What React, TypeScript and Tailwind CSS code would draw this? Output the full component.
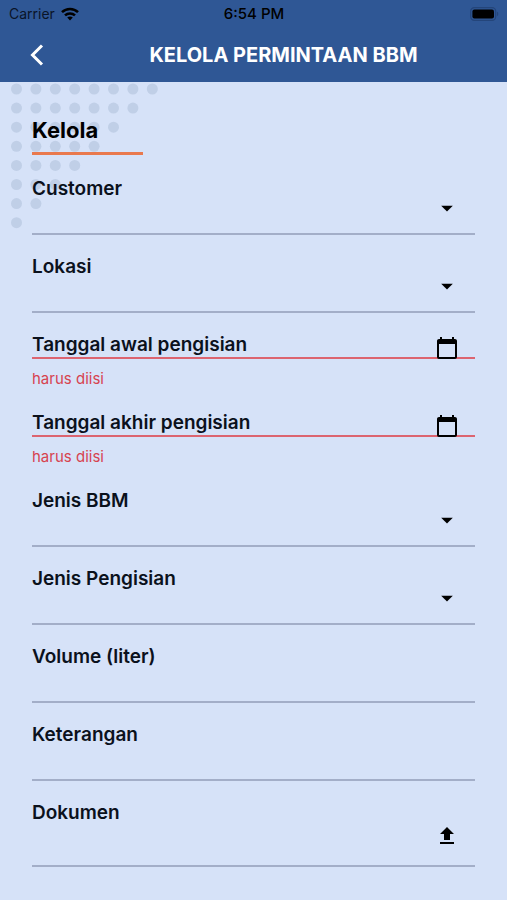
import type { ReactNode } from "react";
import { MdArrowDropDown, MdCalendarToday, MdUpload } from "react-icons/md";

function StatusBar() {
  return (
    <div className="grid h-7 grid-cols-3 items-center pr-2 pl-[9px] text-sm text-[#0a1428]">
      <div className="flex items-center gap-1.5">
        <span>Carrier</span>
        <svg width="18" height="14" viewBox="0 0 18 14" fill="none" stroke="#000" strokeWidth="2.6" aria-hidden="true">
          <path d="M1 5.1C5.4 .9 12.6 .9 17 5.1" />
          <path d="M4 8.4C6.8 5.8 11.2 5.8 14 8.4" />
          <path d="M9 13.4 6.2 10.5C7.7 9.1 10.3 9.1 11.8 10.5Z" fill="#000" stroke="none" />
        </svg>
      </div>
      <span className="text-center text-[15px] font-medium text-black">6:54 PM</span>
      <svg className="justify-self-end" width="29" height="14" viewBox="0 0 29 14" aria-hidden="true">
        <rect x=".7" y=".7" width="25" height="12.6" rx="3.6" fill="none" stroke="#24457a" strokeWidth="1.2" />
        <rect x="2.4" y="2.4" width="21.6" height="9.2" rx="2" fill="#000" />
        <path d="M27 4.8c1.7.6 1.7 3.8 0 4.4Z" fill="#24457a" />
      </svg>
    </div>
  );
}

function DotPattern() {
  const dots: ReactNode[] = [];
  for (let row = 0; row < 8; row++) {
    for (let col = 0; col < 8 - row; col++) {
      dots.push(<circle key={`${row}-${col}`} cx={16.5 + col * 19.4} cy={7 + row * 19.1} r="5.5" />);
    }
  }
  return (
    <svg className="pointer-events-none absolute top-0 left-0" width="160" height="150" fill="#c0cfe7" aria-hidden="true">
      {dots}
    </svg>
  );
}

type FieldProps = { id: string; label: string; kind: "select" | "date" | "text" | "file" };

const control = "col-start-1 row-start-1 w-full appearance-none rounded-none border-b-2 bg-transparent pt-6 pr-14 text-base outline-none";
const iconBox = "pointer-events-none col-start-1 row-start-1 mr-4 flex w-6 items-center justify-center justify-self-end pt-2 pb-0.5";

function Field({ id, label, kind }: FieldProps) {
  const errorId = `${id}-error`;
  return (
    <div className="pt-[18px]">
      <div className="grid">
        {kind === "select" && (
          <select id={id} defaultValue="" className={`${control} h-[60px] border-[#a3aec8]`}>
            <option value=""></option>
          </select>
        )}
        {kind === "text" && <input id={id} type="text" className={`${control} h-[60px] border-[#a3aec8]`} />}
        {kind === "date" && (
          <input
            id={id}
            type="text"
            aria-invalid="true"
            aria-describedby={errorId}
            className={`${control} h-7 border-[#dc6470]`}
          />
        )}
        {kind === "file" && (
          <input id={id} type="file" className={`${control} h-[68px] border-[#a3aec8] text-transparent file:hidden`} />
        )}
        <label
          htmlFor={id}
          className="z-10 col-start-1 row-start-1 self-start justify-self-start text-[19px] leading-7 font-semibold text-[#0b111c]"
        >
          {label}
        </label>
        {kind === "select" && (
          <span className={`${iconBox} self-stretch`}>
            <MdArrowDropDown className="size-7 shrink-0" />
          </span>
        )}
        {kind === "date" && (
          <span className={`${iconBox} h-7 self-start`}>
            <MdCalendarToday className="size-6 shrink-0" />
          </span>
        )}
        {kind === "file" && (
          <span className={`${iconBox} self-stretch`}>
            <MdUpload className="size-6 shrink-0" />
          </span>
        )}
      </div>
      {kind === "date" && (
        <p id={errorId} className="pt-2 text-[15px] leading-6 text-[#d7434f]">
          harus diisi
        </p>
      )}
    </div>
  );
}

const fields: FieldProps[] = [
  { id: "customer", label: "Customer", kind: "select" },
  { id: "lokasi", label: "Lokasi", kind: "select" },
  { id: "tanggal-awal", label: "Tanggal awal pengisian", kind: "date" },
  { id: "tanggal-akhir", label: "Tanggal akhir pengisian", kind: "date" },
  { id: "jenis-bbm", label: "Jenis BBM", kind: "select" },
  { id: "jenis-pengisian", label: "Jenis Pengisian", kind: "select" },
  { id: "volume", label: "Volume (liter)", kind: "text" },
  { id: "keterangan", label: "Keterangan", kind: "text" },
  { id: "dokumen", label: "Dokumen", kind: "file" },
];

export default function App() {
  return (
    <div className="flex min-h-screen flex-col bg-[#d6e2f8] font-['Inter',sans-serif] text-black">
      <header className="bg-[#2f5795]">
        <StatusBar />
        <div className="flex h-[54px] items-center">
          <button type="button" aria-label="Kembali" className="flex h-10 w-[60px] items-center pl-[29px]">
            <svg width="16" height="22" viewBox="0 0 16 22" fill="none" stroke="#fff" strokeWidth="3" aria-hidden="true">
              <path d="M13 1.5 3.5 11 13 20.5" />
            </svg>
          </button>
          <h1 className="flex-1 text-center text-xl font-bold text-white">KELOLA PERMINTAAN BBM</h1>
        </div>
      </header>
      <main className="relative flex-1 px-8 pt-8 pb-8">
        <DotPattern />
        <form className="relative">
          <h2 className="mb-0.5 w-[111px] border-b-[3px] border-[#e9794e] pb-1.5 text-[22px] leading-8 font-bold">Kelola</h2>
          {fields.map((field) => (
            <Field key={field.id} {...field} />
          ))}
        </form>
      </main>
    </div>
  );
}
